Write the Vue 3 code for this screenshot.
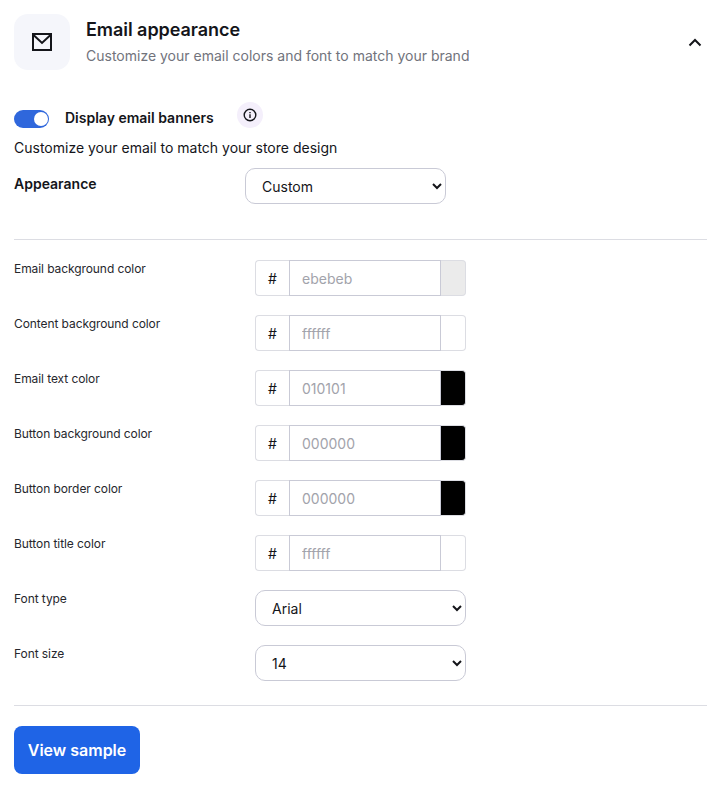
<script setup>
const colors = [
  { label: 'Email background color', value: 'ebebeb', swatch: '#ebebeb' },
  { label: 'Content background color', value: 'ffffff', swatch: '#ffffff' },
  { label: 'Email text color', value: '010101', swatch: '#010101' },
  { label: 'Button background color', value: '000000', swatch: '#000000' },
  { label: 'Button border color', value: '000000', swatch: '#000000' },
  { label: 'Button title color', value: 'ffffff', swatch: '#ffffff' },
]
</script>

<template>
  <main class="page">
    <header class="head">
      <div class="icon-box">
        <svg width="20" height="18" viewBox="0 0 20 18" fill="none" stroke="#14151a" stroke-width="2">
          <rect x="1" y="1" width="18" height="16" />
          <path d="M1.500 2 10 10l8.500-8" />
        </svg>
      </div>
      <div class="head-text">
        <h1>Email appearance</h1>
        <p>Customize your email colors and font to match your brand</p>
      </div>
      <svg class="caret" width="14" height="9" viewBox="0 0 14 9" fill="none" stroke="#14151a" stroke-width="2">
        <path d="M1.500 7.500 7 2l5.500 5.500" />
      </svg>
    </header>

    <div class="banner-row">
      <span class="toggle"><span class="knob"></span></span>
      <span class="banner-label">Display email banners</span>
      <span class="info">
        <svg width="14" height="14" viewBox="0 0 14 14" fill="none" stroke="#14151a" stroke-width="1.400">
          <circle cx="7" cy="7" r="5.800" />
          <path d="M7 6.300v3.600M7 3.900v1.300" />
        </svg>
      </span>
    </div>
    <p class="intro">Customize your email to match your store design</p>
    <div class="appearance-row">
      <span class="appearance-label">Appearance</span>
      <select class="select appearance-select"><option>Custom</option></select>
    </div>

    <hr class="rule first" />

    <div class="fields">
      <div v-for="c in colors" :key="c.label" class="field">
        <label>{{ c.label }}</label>
        <div class="color-input">
          <span class="hash">#</span>
          <input type="text" :placeholder="c.value" />
          <span class="swatch" :style="{ background: c.swatch }"></span>
        </div>
      </div>
      <div class="field">
        <label>Font type</label>
        <select class="select wide"><option>Arial</option></select>
      </div>
      <div class="field">
        <label>Font size</label>
        <select class="select wide"><option>14</option></select>
      </div>
    </div>

    <hr class="rule last" />

    <button class="sample" type="button">View sample</button>
  </main>
</template>

<style scoped>
.page {
  box-sizing: border-box;
  width: 721px;
  height: 787px;
  padding: 14px 14px 0;
  background: #fff;
  color: #14151a;
  font-family: Inter, "Liberation Sans", sans-serif;
  overflow: hidden;
}
.head {
  display: flex;
  height: 56px;
  align-items: flex-start;
}
.icon-box {
  width: 56px;
  height: 56px;
  flex: none;
  border-radius: 14px;
  background: #f5f6fb;
  display: flex;
  align-items: center;
  justify-content: center;
}
.head-text {
  flex: 1;
  margin-left: 16px;
}
h1 {
  margin: 5px 0 0;
  font-size: 18px;
  line-height: 22px;
  font-weight: 600;
  letter-spacing: -0.05px;
}
.head-text p {
  margin: 5px 0 0;
  font-size: 14px;
  line-height: 20px;
  color: #71737c;
}
.caret {
  margin: 24px 5px 0 0;
}
.banner-row {
  display: flex;
  align-items: flex-start;
  margin-top: 32px;
  height: 26px;
}
.toggle {
  box-sizing: border-box;
  width: 35px;
  height: 18px;
  margin-top: 8px;
  flex: none;
  padding: 2px 1px 2px 20px;
  border-radius: 9px;
  background: #2f67dc;
}
.knob {
  display: block;
  width: 14px;
  height: 14px;
  border-radius: 50%;
  background: #fff;
}
.banner-label {
  margin: 7px 0 0 16px;
  font-size: 14px;
  line-height: 18px;
  font-weight: 600;
}
.info {
  width: 26px;
  height: 26px;
  margin-left: 23px;
  border-radius: 50%;
  background: #f4effb;
  display: flex;
  align-items: center;
  justify-content: center;
}
.intro {
  margin: 10px 0 0;
  font-size: 14px;
  line-height: 20px;
}
.appearance-row {
  display: flex;
  align-items: flex-start;
  margin-top: 10px;
}
.appearance-label {
  width: 231px;
  font-size: 14px;
  line-height: 18px;
  margin-top: 7px;
  font-weight: 600;
}
.select {
  box-sizing: border-box;
  height: 36px;
  border: 1px solid #c9cad6;
  border-radius: 10px;
  background-color: #fff;
  color: #14151a;
  font-family: Inter, "Liberation Sans", sans-serif;
  font-size: 14px;
  padding: 0 12px;
}
.appearance-select {
  width: 201px;
}
.rule {
  height: 1px;
  border: 0;
  margin: 0;
  background: #dcdde3;
}
.rule.first {
  margin-top: 35px;
}
.rule.last {
  margin-top: 24px;
}
.fields {
  display: flex;
  flex-direction: column;
  gap: 19px;
  margin-top: 20px;
}
.field {
  display: flex;
  align-items: flex-start;
  height: 36px;
}
.field label {
  width: 241px;
  flex: none;
  padding-top: 1px;
  font-size: 12px;
  line-height: 16px;
  letter-spacing: -0.08px;
  color: #26272d;
}
.wide {
  width: 211px;
}
.color-input {
  display: flex;
  width: 211px;
  height: 36px;
}
.hash {
  box-sizing: border-box;
  width: 34px;
  height: 36px;
  flex: none;
  text-align: center;
  font-size: 14px;
  line-height: 35px;
  border: 1px solid #dcdde3;
  border-right: 0;
  border-radius: 4px 0 0 4px;
}
.color-input input {
  box-sizing: border-box;
  width: 152px;
  height: 36px;
  flex: none;
  padding: 0 12px;
  border: 1px solid #c9cad6;
  border-radius: 0;
  outline: 0;
  font-family: Inter, "Liberation Sans", sans-serif;
  font-size: 14px;
  background: #fff;
}
.color-input input::placeholder {
  color: #a2a3ab;
  opacity: 1;
}
.swatch {
  box-sizing: border-box;
  flex: 1;
  height: 36px;
  border: 1px solid #dcdde3;
  border-left: 0;
  border-radius: 0 4px 4px 0;
}
.sample {
  display: block;
  width: 126px;
  height: 48px;
  margin-top: 20px;
  border: 0;
  border-radius: 8px;
  background: #1f64e6;
  color: #fff;
  font-family: Inter, "Liberation Sans", sans-serif;
  font-size: 16px;
  font-weight: 600;
}
</style>
<style>
body { background: #fff; }
</style>
